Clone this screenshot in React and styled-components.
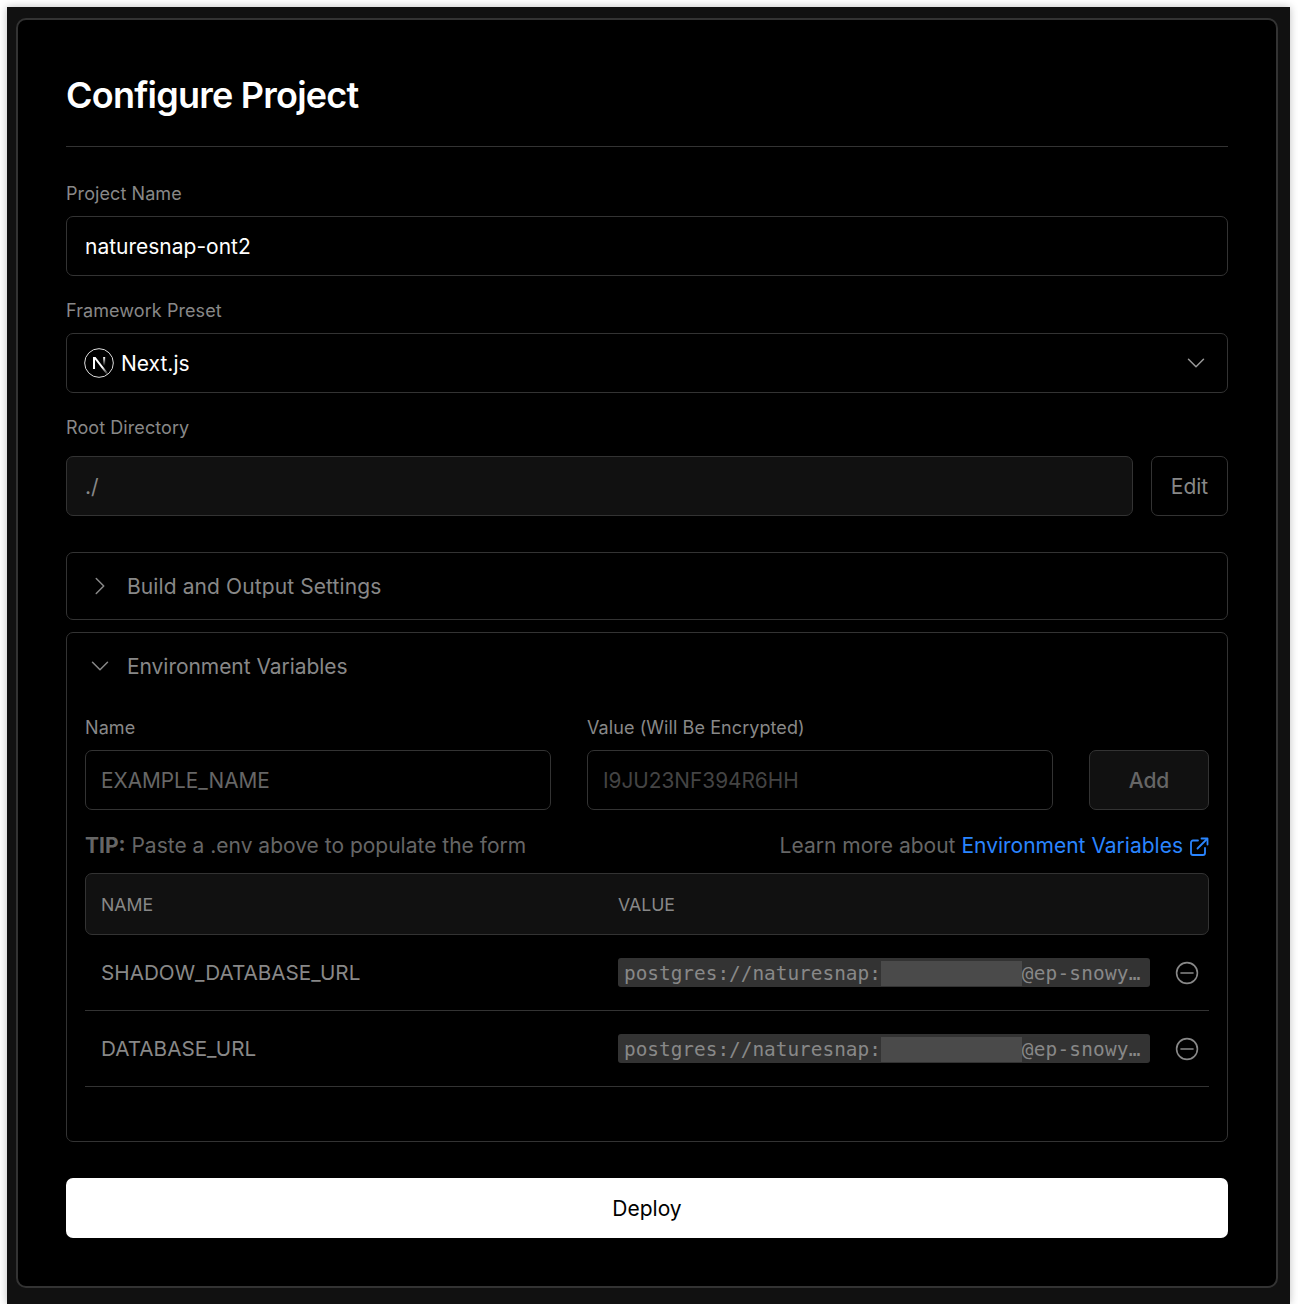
import React from 'react';
import styled, { createGlobalStyle } from 'styled-components';
import { ChevronDown, ChevronRight } from 'lucide-react';

const Global = createGlobalStyle`
* { box-sizing: border-box; }
html, body { margin: 0; background: #fff; }
body { font-family: Inter, "Liberation Sans", sans-serif; }
`

const Frame = styled.div`
width: 1283px;
height: 1297px;
margin: 7px 0 0 7px;
padding: 11px 12px 16px 9px;
background: #111;
box-shadow: 0 0 8px rgba(0, 0, 0, 0.25);`

const Card = styled.main`
height: 100%;
padding: 0 48px;
background: #000;
border: 2px solid #333;
border-radius: 10px;
display: flex;
flex-direction: column;`

const Header = styled.header`
height: 127px;
padding-top: 50px;
border-bottom: 1px solid #333;`

const Title = styled.h1`
margin: 0;
font-size: 36px;
line-height: 50px;
font-weight: 600;
letter-spacing: -0.77px;
color: #fff;`

const Label = styled.label`
display: block;
height: 23px;
margin-top: ${p => p.$top || 23}px;
margin-bottom: ${p => p.$bottom || 11}px;
font-size: 18px;
line-height: 23px;
letter-spacing: 0.08px;
color: #888;`

const Field = styled.input`
display: block;
width: 100%;
height: 60px;
padding: 0 ${p => p.$pad || 18}px;
background: ${p => p.$filled ? '#111' : '#000'};
border: 1px solid #333;
border-radius: 7px;
outline: 0;
font-family: inherit;
font-size: 21px;
color: ${p => p.$muted ? '#888' : '#fff'};
&::placeholder { font-size: 20.8px; color: ${p => p.$dim ? '#444' : '#666'}; opacity: 1; }`

const Select = styled.div`
display: flex;
align-items: center;
gap: 7px;
height: 60px;
padding: 0 16px 0 17px;
border: 1px solid #333;
border-radius: 7px;
font-size: 21px;
color: #fff;`

const SelectValue = styled.span`
flex: 1;`

const Row = styled.div`
display: flex;
gap: 18px;`

const Edit = styled.button`
flex: none;
width: 77px;
height: 60px;
padding: 0;
background: #000;
border: 1px solid #333;
border-radius: 7px;
font-family: inherit;
font-size: 21px;
color: #888;`

const Panel = styled.section`
margin-top: ${p => p.$top}px;
border: 1px solid #333;
border-radius: 7px;
color: #888;`

const PanelHead = styled.div`
display: flex;
align-items: center;
gap: 12px;
height: 66px;
padding-left: 18px;
font-size: 21px;
letter-spacing: ${p => p.$spacing}px;
svg { flex: none; }`

const PanelBody = styled.div`
padding: 0 18px 54px 18px;`

const EnvForm = styled.div`
display: grid;
grid-template-columns: 466px 466px 120px;
justify-content: space-between;
align-items: end;`

const Add = styled.button`
height: 60px;
padding: 0;
background: #111;
border: 1px solid #333;
border-radius: 7px;
font-family: inherit;
font-size: 21px;
font-weight: 500;
color: #666;`

const TipRow = styled.div`
display: flex;
justify-content: space-between;
align-items: center;
height: 63px;
padding-top: 7px;
font-size: 21px;
color: #666;`

const Tip = styled.span`
b { font-weight: 700; }`

const Learn = styled.span`
display: flex;
align-items: center;
gap: 6px;
svg { margin-top: 4px; color: #2a85ff; }`

const Blue = styled.a`
color: #2a85ff;`

const TableHead = styled.div`
display: grid;
grid-template-columns: 517px 1fr;
align-items: center;
height: 62px;
padding-left: 15px;
background: #111;
border: 1px solid #333;
border-radius: 7px;
font-size: 17.7px;
color: #888;`

const EnvRow = styled.div`
display: grid;
grid-template-columns: 517px 532px 1fr;
align-items: center;
height: 76px;
padding: 0 0 0 16px;
border-bottom: 1px solid #333;
font-size: 20.7px;
color: #888;
svg { justify-self: end; margin-right: 9px; }`

const Chip = styled.code`
display: flex;
align-items: center;
height: 29px;
padding: 2px 0 0 6px;
background: #333;
border-radius: 3px;
overflow: hidden;
font-family: "DejaVu Sans Mono", "Liberation Mono", monospace;
font-size: 19.4px;
white-space: nowrap;
color: #888;`

const Redacted = styled.span`
flex: none;
width: 141px;
height: 25px;
background: #4a4a4a;
filter: blur(0.6px);`

const Tail = styled.span`
letter-spacing: 0.2px;`

const Deploy = styled.button`
height: 60px;
margin-top: 36px;
padding: 0;
background: #fff;
border: 0;
border-radius: 7px;
font-family: inherit;
font-size: 21px;
font-weight: 400;
color: #000;`

const NextLogo = () => (
    <svg width="30" height="30" viewBox="0 0 180 180" fill="none">
        <defs>
            <linearGradient id="nextA" x1="109" y1="116.5" x2="144.5" y2="160.5" gradientUnits="userSpaceOnUse">
                <stop stopColor="#fff" />
                <stop offset="1" stopColor="#fff" stopOpacity="0" />
            </linearGradient>
            <linearGradient id="nextB" x1="121" y1="54" x2="120.8" y2="106.9" gradientUnits="userSpaceOnUse">
                <stop stopColor="#fff" />
                <stop offset="1" stopColor="#fff" stopOpacity="0" />
            </linearGradient>
        </defs>
        <circle cx="90" cy="90" r="86" fill="#000" stroke="#ddd" strokeWidth="6" />
        <path d="M149.508 157.52L69.142 54H54V125.97H66.1136V69.3836L139.999 164.845C143.333 162.614 146.509 160.165 149.508 157.52Z" fill="url(#nextA)" />
        <rect x="115" y="54" width="12" height="72" fill="url(#nextB)" />
    </svg>
);

const ExternalIcon = () => (
    <svg width="20" height="20" viewBox="0 0 20 20" fill="none" stroke="currentColor" strokeWidth="1.8" strokeLinecap="round" strokeLinejoin="round">
        <path d="M9 3.5H4a2 2 0 0 0-2 2V16a2 2 0 0 0 2 2h10a2 2 0 0 0 2-2v-5" />
        <path d="M8.5 11.5L18 2" />
        <path d="M12.5 1.5h6v6" />
    </svg>
);

const RemoveIcon = () => (
    <svg width="26" height="26" viewBox="0 0 26 26" fill="none" stroke="#888" strokeWidth="1.6" strokeLinecap="round">
        <circle cx="13" cy="13" r="10.4" />
        <path d="M7 13h12" />
    </svg>
);

const rows = ['SHADOW_DATABASE_URL', 'DATABASE_URL'];

export default () => (
    <>
        <Global />
        <Frame>
            <Card>
                <Header>
                    <Title>Configure Project</Title>
                </Header>
                <Label $top={35}>Project Name</Label>
                <Field readOnly value="naturesnap-ont2" />
                <Label>Framework Preset</Label>
                <Select>
                    <NextLogo />
                    <SelectValue>Next.js</SelectValue>
                    <ChevronDown size={30} strokeWidth={1.2} color="#999" />
                </Select>
                <Label $bottom={17}>Root Directory</Label>
                <Row>
                    <Field readOnly $filled $muted value="./" />
                    <Edit>Edit</Edit>
                </Row>
                <Panel $top={36}>
                    <PanelHead $spacing={0.1}>
                        <ChevronRight size={30} strokeWidth={1.2} />
                        Build and Output Settings
                    </PanelHead>
                </Panel>
                <Panel $top={12}>
                    <PanelHead $spacing={-0.05}>
                        <ChevronDown size={30} strokeWidth={1.2} />
                        Environment Variables
                    </PanelHead>
                    <PanelBody>
                        <EnvForm>
                            <div>
                                <Label $top={17}>Name</Label>
                                <Field readOnly $pad={15} placeholder="EXAMPLE_NAME" />
                            </div>
                            <div>
                                <Label $top={17}>Value (Will Be Encrypted)</Label>
                                <Field readOnly $pad={15} $dim placeholder="I9JU23NF394R6HH" />
                            </div>
                            <Add>Add</Add>
                        </EnvForm>
                        <TipRow>
                            <Tip><b>TIP:</b> Paste a .env above to populate the form</Tip>
                            <Learn>
                                <span>Learn more about <Blue>Environment Variables</Blue></span>
                                <ExternalIcon />
                            </Learn>
                        </TipRow>
                        <TableHead>
                            <span>NAME</span>
                            <span>VALUE</span>
                        </TableHead>
                        {rows.map(name => (
                            <EnvRow key={name}>
                                <span>{name}</span>
                                <Chip>postgres://naturesnap:<Redacted /><Tail>@ep-snowy…</Tail></Chip>
                                <RemoveIcon />
                            </EnvRow>
                        ))}
                    </PanelBody>
                </Panel>
                <Deploy>Deploy</Deploy>
            </Card>
        </Frame>
    </>
)
